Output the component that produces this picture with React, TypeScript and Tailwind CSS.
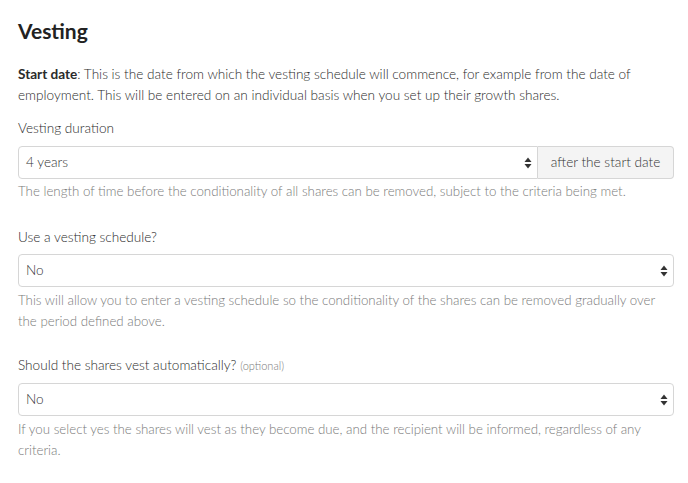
import React from "react";

function Arrows() {
  return (
    <svg width="8" height="12" viewBox="0 0 8 12" className="shrink-0">
      <path d="M4 0.5 L7.5 5 L0.5 5 Z" fill="#333" />
      <path d="M4 11.5 L7.5 7 L0.5 7 Z" fill="#333" />
    </svg>
  );
}

interface SelectProps {
  value: string;
  grouped?: boolean;
}

function FakeSelect({ value, grouped }: SelectProps) {
  return (
    <div
      className={`flex h-[33px] flex-1 items-center justify-between border border-[#d6d6d6] bg-white pl-[7px] pr-[5px] text-[#333] ${
        grouped ? "rounded-l-[4px]" : "rounded-[4px]"
      }`}
    >
      <span>{value}</span>
      <Arrows />
    </div>
  );
}

export default function App() {
  return (
    <div
      className="min-h-screen bg-white pt-[18px] pl-[18px] pr-[14px] text-[13.6px] font-light leading-[21px] text-[#2b2b2b]"
      style={{ fontFamily: "Lato, 'Open Sans', sans-serif" }}
    >
      <h1 className="text-[21px] font-bold leading-[26px] text-[#222]">Vesting</h1>

      <p className="mt-[20px]">
        <span className="font-bold">Start date</span>: This is the date from which the vesting
        schedule will commence, for example from the date of employment. This will be entered on
        an individual basis when you set up their growth shares.
      </p>

      {/* Vesting duration */}
      <div className="mt-[12px]">
        <label className="block">Vesting duration</label>
        <div className="mt-[7px] flex">
          <FakeSelect value="4 years" grouped />
          <div className="flex h-[33px] w-[136px] items-center justify-center rounded-r-[4px] border border-l-0 border-[#d6d6d6] bg-[#f4f4f4] text-[#333]">
            after the start date
          </div>
        </div>
        <p className="mt-[2px] text-[13.3px] text-[#7a7a7a]">
          The length of time before the conditionality of all shares can be removed, subject to
          the criteria being met.
        </p>
      </div>

      {/* Vesting schedule */}
      <div className="mt-[25px]">
        <label className="block">Use a vesting schedule?</label>
        <div className="mt-[6px] flex">
          <FakeSelect value="No" />
        </div>
        <p className="mt-[3px] pr-[6px] text-[13.3px] text-[#7a7a7a]">
          This will allow you to enter a vesting schedule so the conditionality of the shares can
          be removed gradually over the period defined above.
        </p>
      </div>

      {/* Auto vest */}
      <div className="mt-[23px]">
        <label className="block">
          Should the shares vest automatically?{" "}
          <span className="text-[11px] text-[#7a7a7a]">(optional)</span>
        </label>
        <div className="mt-[7px] flex">
          <FakeSelect value="No" />
        </div>
        <p className="mt-[3px] pr-[6px] text-[13.3px] text-[#7a7a7a]">
          If you select yes the shares will vest as they become due, and the recipient will be
          informed, regardless of any criteria.
        </p>
      </div>
    </div>
  );
}
